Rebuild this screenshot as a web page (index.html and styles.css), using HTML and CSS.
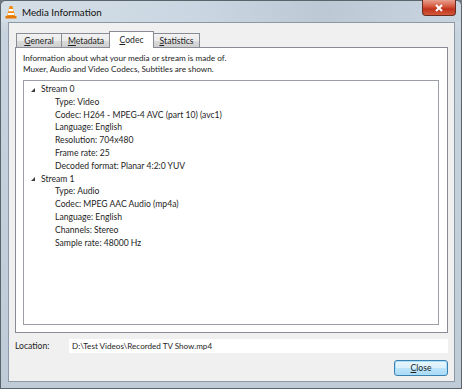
FILE: index.html
```html
<!DOCTYPE html>
<html lang="en">
<head>
    <title>Media Information</title>
    <link rel="stylesheet" href="styles.css">
</head>
<body>
    <div class="window">
        <div class="titlebar">
            <svg class="app-icon" width="12" height="14" viewBox="0 0 12 14">
                <path d="M4.6 1 L7.4 1 L10 11 L2 11 Z" fill="#f08a10"/>
                <path d="M4 4 L8 4 L8.6 6.2 L3.4 6.2 Z" fill="#fff"/>
                <path d="M3 8 L9 8 L9.5 10 L2.5 10 Z" fill="#fff"/>
                <path d="M0.5 11 L11.5 11 L11.5 13.5 L0.5 13.5 Z" fill="#e4780a"/>
            </svg>
            <span class="title">Media Information</span>
            <div class="close-x">
                <svg width="10" height="8" viewBox="0 0 10 8">
                    <path d="M2 1 L8 7 M8 1 L2 7" stroke="#fff" stroke-width="2"/>
                </svg>
            </div>
        </div>

        <div class="client">
            <div class="tabs">
                <div class="tab tab-general"><u>G</u>eneral</div>
                <div class="tab tab-meta"><u>M</u>etadata</div>
                <div class="tab tab-codec active"><u>C</u>odec</div>
                <div class="tab tab-stats"><u>S</u>tatistics</div>
            </div>

            <div class="panel">
                <p class="intro">Information about what your media or stream is made of.<br>Muxer, Audio and Video Codecs, Subtitles are shown.</p>
                <div class="tree">
                    <div class="node"><span class="arrow"></span>Stream 0</div>
                    <div class="leaf">Type: Video</div>
                    <div class="leaf">Codec: H264 - MPEG-4 AVC (part 10) (avc1)</div>
                    <div class="leaf">Language: English</div>
                    <div class="leaf">Resolution: 704x480</div>
                    <div class="leaf">Frame rate: 25</div>
                    <div class="leaf">Decoded format: Planar 4:2:0 YUV</div>
                    <div class="node"><span class="arrow"></span>Stream 1</div>
                    <div class="leaf">Type: Audio</div>
                    <div class="leaf">Codec: MPEG AAC Audio (mp4a)</div>
                    <div class="leaf">Language: English</div>
                    <div class="leaf">Channels: Stereo</div>
                    <div class="leaf">Sample rate: 48000 Hz</div>
                </div>
            </div>

            <div class="location">
                <span class="loc-label">Location:</span>
                <div class="loc-field">D:\Test Videos\Recorded TV Show.mp4</div>
            </div>

            <div class="buttons">
                <button class="close-btn"><u>C</u>lose</button>
            </div>
        </div>
    </div>
</body>
</html>
```

FILE: styles.css
```css
html, body {
    margin: 0;
    padding: 0;
    background: #6f7780;
}
body {
    font-family: Lato, "Noto Sans", Arial, sans-serif;
    font-size: 8.6px;
    color: #1e1e1e;
}
.window {
    width: 462px;
    height: 389px;
    box-sizing: border-box;
    border: 1px solid #5b636b;
    border-radius: 6px 6px 0 0;
    background: linear-gradient(180deg, #dbe4ec 0%, #c7d3de 8%, #bfccd8 100%);
    display: flex;
    flex-direction: column;
}
.titlebar {
    height: 21px;
    display: flex;
    align-items: center;
    position: relative;
    background: linear-gradient(90deg, #d4dee7 0%, #c9d6e1 45%, #bcc9d5 70%, #c8d4df 100%);
    border-radius: 5px 5px 0 0;
}
.app-icon {
    margin-left: 4px;
    margin-top: 1px;
}
.title {
    margin-left: 5px;
    font-size: 9.8px;
    color: #111;
}
.close-x {
    position: absolute;
    right: 5px;
    top: -1px;
    width: 34px;
    height: 16px;
    border-radius: 0 0 4px 4px;
    border: 1px solid #6a2b22;
    border-top: none;
    box-sizing: border-box;
    background: linear-gradient(180deg, #e8a08f 0%, #d4553c 45%, #c0321c 60%, #d25a3a 100%);
    display: flex;
    align-items: center;
    justify-content: center;
}
.client {
    margin: 0 6px 6px 7px;
    flex: 1;
    background: #f0f0f0;
    border: 1px solid #8d9aa6;
    padding: 7px 6px 0 6px;
    display: flex;
    flex-direction: column;
}
.tabs {
    display: flex;
    align-items: flex-end;
    height: 17px;
    padding-left: 1px;
    position: relative;
    z-index: 1;
}
.tab {
    height: 14px;
    box-sizing: border-box;
    border: 1px solid #898c95;
    border-bottom: none;
    background: linear-gradient(180deg, #f2f2f2 0%, #ebebeb 50%, #dcdcdc 51%, #cfcfcf 100%);
    display: flex;
    align-items: center;
    justify-content: center;
    margin-right: -1px;
}
.tab-general { width: 46px; }
.tab-meta { width: 50px; }
.tab-codec { width: 45px; }
.tab-stats { width: 47px; }
.tab.active {
    height: 17px;
    background: #fff;
    margin: 0 -1px -1px -1px;
    padding-bottom: 1px;
    position: relative;
    z-index: 2;
}
.panel {
    height: 286px;
    box-sizing: border-box;
    background: #fff;
    border: 1px solid #898c95;
    padding: 5px 8px 7px 7px;
    display: flex;
    flex-direction: column;
}
.intro {
    margin: 0 0 5px 0;
    line-height: 11px;
    font-size: 8.2px;
}
.tree {
    flex: 1;
    border: 1px solid #9c9fa6;
    padding-top: 2px;
}
.node, .leaf {
    height: 12.8px;
    line-height: 12.8px;
    white-space: nowrap;
}
.node {
    padding-left: 7px;
    display: flex;
    align-items: center;
}
.leaf {
    padding-left: 31px;
}
.arrow {
    width: 0;
    height: 0;
    border-left: 4px solid transparent;
    border-bottom: 4px solid #3c3c3c;
    margin-right: 6px;
    margin-top: 1px;
}
.location {
    display: flex;
    align-items: center;
    margin-top: 6px;
    height: 14px;
}
.loc-label {
    width: 54px;
}
.loc-field {
    flex: 1;
    height: 14px;
    line-height: 14px;
    background: #fff;
    padding-left: 3px;
    font-size: 8.1px;
}
.buttons {
    display: flex;
    justify-content: flex-end;
    margin-top: 7px;
}
.close-btn {
    width: 54px;
    height: 16px;
    padding: 0;
    font-family: inherit;
    font-size: 8.6px;
    color: #1e1e1e;
    border: 1px solid #3c7fb1;
    border-radius: 3px;
    background: linear-gradient(180deg, #eaf6fd 0%, #d9f0fc 50%, #bee6fd 51%, #a7d9f5 100%);
    box-shadow: inset 0 0 0 1px #a8e0fb;
}
```
